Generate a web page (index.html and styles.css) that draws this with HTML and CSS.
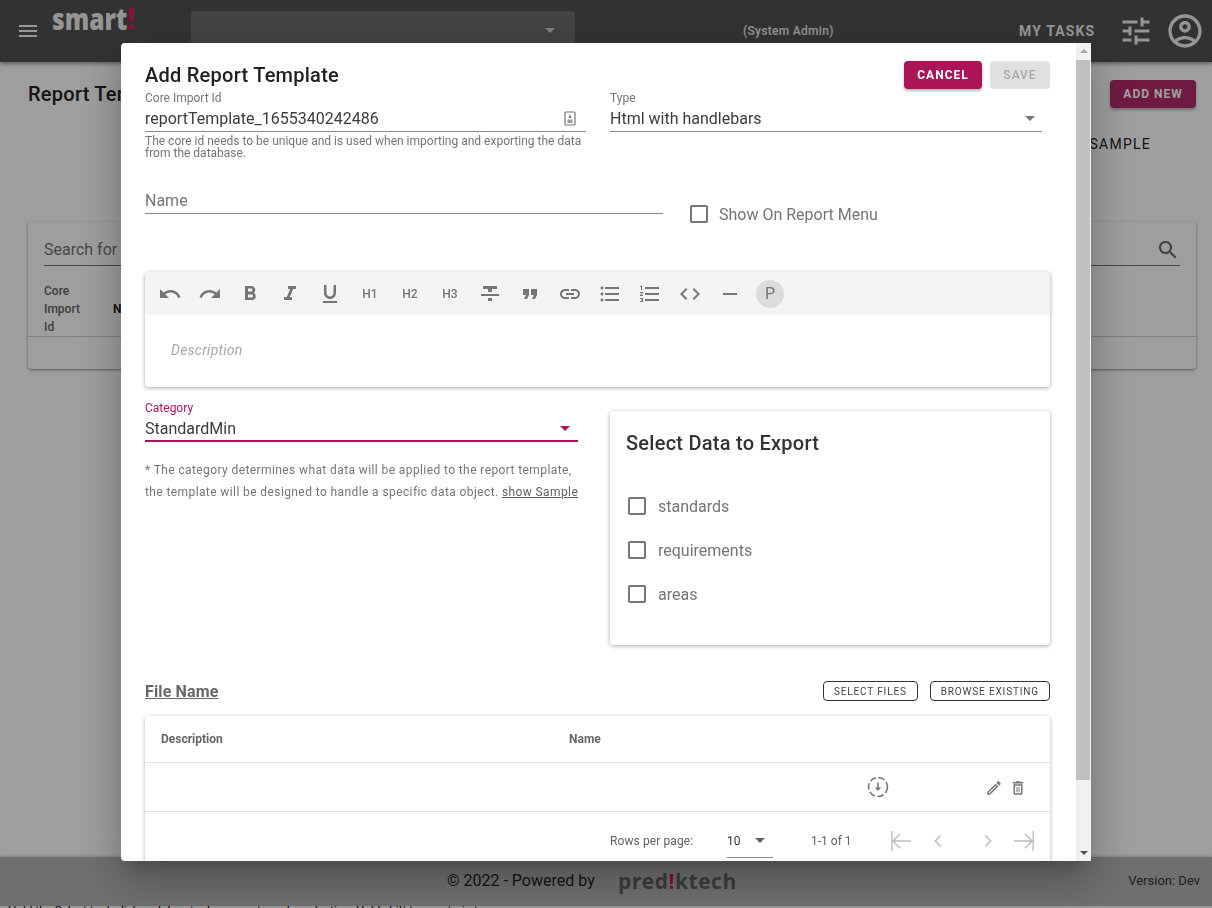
FILE: index.html
```html
<!DOCTYPE html>
<html lang="en">
<head>
<meta charset="UTF-8">
<meta name="viewport" content="width=device-width, initial-scale=1.0">
<title>Report Templates</title>
<link rel="stylesheet" href="styles.css">
</head>
<body>

<div class="page">
    <header class="topbar">
        <svg class="menu-icon" viewBox="0 0 24 24"><path d="M3 18h18v-2H3v2zm0-5h18v-2H3v2zm0-7v2h18V6H3z"/></svg>
        <div class="logo"><span class="logo-text">smart<span class="logo-mark">!</span></span></div>
        <div class="org-select"><span class="caret"></span></div>
        <div class="user-role">(System Admin)</div>
        <div class="my-tasks">MY TASKS</div>
        <svg class="tune-icon" viewBox="0 0 24 24"><path d="M3 17v2h6v-2H3zM3 5v2h10V5H3zm10 16v-2h8v-2h-8v-2h-2v6h2zM7 9v2H3v2h4v2h2V9H7zm14 4v-2H11v2h10zm-6-4h2V7h4V5h-4V3h-2v6z"/></svg>
        <svg class="user-icon" viewBox="0 0 24 24"><path d="M12 2C6.48 2 2 6.48 2 12s4.48 10 10 10 10-4.48 10-10S17.52 2 12 2zM7.35 18.5C8.66 17.56 10.26 17 12 17s3.34.56 4.65 1.5C15.34 19.44 13.74 20 12 20s-3.34-.56-4.65-1.5zm10.79-1.38C16.45 15.8 14.32 15 12 15s-4.45.8-6.14 2.12C4.7 15.73 4 13.95 4 12c0-4.42 3.58-8 8-8s8 3.58 8 8c0 1.95-.7 3.73-1.86 5.12z"/><path d="M12 6c-1.93 0-3.5 1.57-3.5 3.5S10.07 13 12 13s3.5-1.57 3.5-3.5S13.93 6 12 6zm0 5c-.83 0-1.5-.67-1.5-1.5S11.17 8 12 8s1.5.67 1.5 1.5S12.83 11 12 11z"/></svg>
    </header>

    <main class="content">
        <div class="content-head">
            <h1 class="page-title">Report Templates</h1>
            <button class="add-new">ADD NEW</button>
        </div>
        <div class="sample-link">SAMPLE</div>
        <section class="list-card">
            <div class="search-row">
                <span>Search for</span>
                <svg class="search-icon" viewBox="0 0 24 24"><path d="M15.5 14h-.79l-.28-.27C15.41 12.59 16 11.11 16 9.5 16 5.91 13.09 3 9.5 3S3 5.91 3 9.5 5.91 16 9.5 16c1.61 0 3.09-.59 4.23-1.57l.27.28v.79l5 4.99L20.49 19l-4.99-5zm-6 0C7.01 14 5 11.99 5 9.5S7.01 5 9.5 5 14 7.01 14 9.5 11.99 14 9.5 14z"/></svg>
            </div>
            <div class="list-head">
                <div class="list-col-core">Core Import Id</div>
                <div class="list-col-name">Name</div>
            </div>
        </section>
    </main>

    <footer class="footer">
        <span class="powered">© 2022 - Powered by</span>
        <span class="brand">pred<span class="logo-mark">!</span>ktech</span>
        <span class="version">Version: Dev</span>
    </footer>
    <div class="bottom-strip">Hold the Select tool, click and drag to draw a rectangular selection. Hold shift to constrain to a square.</div>
</div>

<div class="backdrop"></div>

<div class="modal">
    <div class="modal-body">
        <div class="modal-head">
            <h2 class="modal-title">Add Report Template</h2>
            <div class="modal-actions">
                <button class="btn-cancel">CANCEL</button>
                <button class="btn-save">SAVE</button>
            </div>
        </div>

        <div class="row-core">
            <div class="field field-core">
                <label class="field-label">Core Import Id</label>
                <div class="field-input">
                    <span>reportTemplate_1655340242486</span>
                    <svg class="id-icon" viewBox="0 0 12 15"><rect x="1" y="1" width="10" height="13" rx="1" fill="none" stroke="#757575" stroke-width="1.2"/><path d="M6 3.5l1.6 3.5H4.4z" fill="#757575"/><rect x="3.5" y="8.5" width="5" height="3.5" fill="#9a9a9a"/></svg>
                </div>
                <p class="field-help">The core id needs to be unique and is used when importing and exporting the data from the database.</p>
            </div>
            <div class="field field-type">
                <label class="field-label">Type</label>
                <div class="field-input">
                    <span>Html with handlebars</span>
                    <span class="caret caret-grey"></span>
                </div>
            </div>
        </div>

        <div class="row-name">
            <div class="field-input name-input"><span>Name</span></div>
            <label class="check-item menu-check"><span class="checkbox"></span>Show On Report Menu</label>
        </div>

        <div class="editor">
            <div class="editor-bar">
                <span class="tool"><svg viewBox="0 0 24 24"><path d="M12.5 8c-2.65 0-5.05.99-6.9 2.6L2 7v9h9l-3.62-3.62c1.39-1.16 3.16-1.88 5.12-1.88 3.54 0 6.55 2.31 7.6 5.5l2.37-.78C21.08 11.03 17.15 8 12.5 8z"/></svg></span>
                <span class="tool"><svg viewBox="0 0 24 24"><path d="M18.4 10.6C16.55 8.99 14.15 8 11.5 8c-4.65 0-8.58 3.03-9.96 7.22L3.9 16c1.05-3.19 4.05-5.5 7.6-5.5 1.95 0 3.73.72 5.12 1.88L13 16h9V7l-3.6 3.6z"/></svg></span>
                <span class="tool"><svg viewBox="0 0 24 24"><path d="M15.6 10.79c.97-.67 1.65-1.77 1.65-2.79 0-2.26-1.75-4-4-4H7v14h7.04c2.09 0 3.71-1.7 3.71-3.79 0-1.52-.86-2.82-2.15-3.42zM10 6.5h3c.83 0 1.5.67 1.5 1.5s-.67 1.5-1.5 1.5h-3v-3zm3.5 9H10v-3h3.5c.83 0 1.5.67 1.5 1.5s-.67 1.5-1.5 1.5z"/></svg></span>
                <span class="tool"><svg viewBox="0 0 24 24"><path d="M10 4v3h2.21l-3.42 8H6v3h8v-3h-2.21l3.42-8H18V4z"/></svg></span>
                <span class="tool"><svg viewBox="0 0 24 24"><path d="M12 17c3.31 0 6-2.69 6-6V3h-2.5v8c0 1.93-1.57 3.5-3.5 3.5S8.5 12.93 8.5 11V3H6v8c0 3.31 2.69 6 6 6zm-7 2v2h14v-2H5z"/></svg></span>
                <span class="tool tool-text">H1</span>
                <span class="tool tool-text">H2</span>
                <span class="tool tool-text">H3</span>
                <span class="tool"><svg viewBox="0 0 24 24"><path d="M10 19h4v-3h-4v3zM5 4v3h5v3h4V7h5V4H5zM3 14h18v-2H3v2z"/></svg></span>
                <span class="tool"><svg viewBox="0 0 24 24"><path d="M6 17h3l2-4V7H5v6h3zm8 0h3l2-4V7h-6v6h3z"/></svg></span>
                <span class="tool"><svg viewBox="0 0 24 24"><path d="M3.9 12c0-1.71 1.39-3.1 3.1-3.1h4V7H7c-2.76 0-5 2.24-5 5s2.24 5 5 5h4v-1.9H7c-1.71 0-3.1-1.39-3.1-3.1zM8 13h8v-2H8v2zm9-6h-4v1.9h4c1.71 0 3.1 1.39 3.1 3.1s-1.39 3.1-3.1 3.1h-4V17h4c2.76 0 5-2.24 5-5s-2.24-5-5-5z"/></svg></span>
                <span class="tool"><svg viewBox="0 0 24 24"><path d="M4 10.5c-.83 0-1.5.67-1.5 1.5s.67 1.5 1.5 1.5 1.5-.67 1.5-1.5-.67-1.5-1.5-1.5zm0-6c-.83 0-1.5.67-1.5 1.5S3.17 7.5 4 7.5 5.5 6.83 5.5 6 4.83 4.5 4 4.5zm0 12c-.83 0-1.5.68-1.5 1.5s.68 1.5 1.5 1.5 1.5-.68 1.5-1.5-.67-1.5-1.5-1.5zM7 19h14v-2H7v2zm0-6h14v-2H7v2zm0-8v2h14V5H7z"/></svg></span>
                <span class="tool"><svg viewBox="0 0 24 24"><path d="M2 17h2v.5H3v1h1v.5H2v1h3v-4H2v1zm1-9h1V4H2v1h1v3zm-1 3h1.8L2 13.1v.9h3v-1H3.2L5 10.9V10H2v1zm5-6v2h14V5H7zm0 14h14v-2H7v2zm0-6h14v-2H7v2z"/></svg></span>
                <span class="tool"><svg viewBox="0 0 24 24"><path d="M9.4 16.6L4.8 12l4.6-4.6L8 6l-6 6 6 6 1.4-1.4zm5.2 0l4.6-4.6-4.6-4.6L16 6l6 6-6 6-1.4-1.4z"/></svg></span>
                <span class="tool"><svg viewBox="0 0 24 24"><path d="M19 13H5v-2h14v2z"/></svg></span>
                <span class="tool tool-text tool-p">P</span>
            </div>
            <div class="editor-text">Description</div>
        </div>

        <div class="row-category">
            <div class="category-col">
                <label class="field-label label-active">Category</label>
                <div class="field-input input-active">
                    <span>StandardMin</span>
                    <span class="caret caret-active"></span>
                </div>
                <p class="category-note">* The category determines what data will be applied to the report template, the template will be designed to handle a specific data object. <a class="show-sample">show Sample</a></p>
            </div>
            <div class="export-card">
                <h3 class="export-title">Select Data to Export</h3>
                <label class="check-item"><span class="checkbox"></span>standards</label>
                <label class="check-item"><span class="checkbox"></span>requirements</label>
                <label class="check-item"><span class="checkbox"></span>areas</label>
            </div>
        </div>

        <div class="file-head">
            <span class="file-title">File Name</span>
            <div class="file-actions">
                <button class="btn-outline">SELECT FILES</button>
                <button class="btn-outline">BROWSE EXISTING</button>
            </div>
        </div>

        <div class="file-table">
            <div class="file-row file-row-head">
                <span class="col-desc">Description</span>
                <span class="col-name">Name</span>
            </div>
            <div class="file-row file-row-data">
                <svg class="download-icon" viewBox="0 0 24 24"><circle cx="12" cy="12" r="9.5" fill="none" stroke="#757575" stroke-width="1.6" stroke-dasharray="6.5 2.5"/><path d="M11.2 7.5h1.6v5h2.4L12 16l-3.2-3.5h2.4z" fill="#757575"/></svg>
                <svg class="row-icon edit-icon" viewBox="0 0 24 24"><path d="M14.06 9.02l.92.92L5.92 19H5v-.92l9.06-9.06M17.66 3c-.25 0-.51.1-.7.29l-1.83 1.83 3.75 3.75 1.83-1.83c.39-.39.39-1.02 0-1.41l-2.34-2.34c-.2-.2-.45-.29-.71-.29zm-3.6 3.19L3 17.25V21h3.75L17.81 9.94l-3.75-3.75z"/></svg>
                <svg class="row-icon" viewBox="0 0 24 24"><path d="M6 19c0 1.1.9 2 2 2h8c1.1 0 2-.9 2-2V7H6v12zM8 9h8v10H8V9zm7.5-5l-1-1h-5l-1 1H5v2h14V4z"/><path d="M10 10.5h1.3v7H10zM12.7 10.5H14v7h-1.3z"/></svg>
            </div>
            <div class="file-pager">
                <span class="pager-label">Rows per page:</span>
                <span class="pager-select">10<span class="caret caret-small"></span></span>
                <span class="pager-count">1-1 of 1</span>
                <svg class="pager-icon pager-first" viewBox="0 0 24 24"><path d="M2 1v22M23 12H3M11 4l-8 8 8 8" fill="none" stroke="#bdbdbd" stroke-width="1.5"/></svg>
                <svg class="pager-icon pager-prev" viewBox="0 0 24 24"><path d="M15 6l-6 6 6 6" fill="none" stroke="#bdbdbd" stroke-width="1.7"/></svg>
                <svg class="pager-icon pager-next" viewBox="0 0 24 24"><path d="M9 6l6 6-6 6" fill="none" stroke="#bdbdbd" stroke-width="1.7"/></svg>
                <svg class="pager-icon pager-last" viewBox="0 0 24 24"><path d="M22 1v22M1 12h20M13 4l8 8-8 8" fill="none" stroke="#bdbdbd" stroke-width="1.5"/></svg>
            </div>
        </div>
    </div>

    <div class="scrollbar">
        <span class="scroll-up"></span>
        <div class="scroll-track"><div class="scroll-thumb"></div></div>
        <span class="scroll-down"></span>
    </div>
</div>

</body>
</html>
```

FILE: styles.css
```css
* {
    box-sizing: border-box;
}

body {
    margin: 0;
    width: 1212px;
    height: 908px;
    overflow: hidden;
    background-color: #ffffff;
    font-family: Roboto, "Liberation Sans", sans-serif;
    color: #3c3c3c;
}

h1, h2, h3, p {
    margin: 0;
}

button {
    font-family: inherit;
    border: none;
    cursor: pointer;
}

.page {
    display: flex;
    flex-direction: column;
    height: 908px;
}

/* top bar */
.topbar {
    display: flex;
    align-items: center;
    height: 62px;
    flex-shrink: 0;
    padding-left: 16px;
    background-color: #525252;
    box-shadow: 0 2px 4px rgba(0, 0, 0, 0.4);
    position: relative;
}

.menu-icon {
    width: 24px;
    height: 24px;
    fill: #f5f5f5;
}

.logo {
    align-self: flex-start;
    margin: 0 0 0 12px;
    width: 139px;
    height: 36px;
    font-family: "Open Sans", sans-serif;
    font-weight: 800;
    font-size: 25px;
    line-height: 30px;
    color: #f0f0f0;
}

/* the mark is taller and narrower than any installed font */
.logo-text {
    display: inline-block;
    transform: scale(0.98, 1.2);
    transform-origin: left top;
}

.logo-mark {
    color: #d81b60;
}

.org-select {
    align-self: flex-end;
    display: flex;
    justify-content: flex-end;
    align-items: center;
    width: 384px;
    height: 51px;
    padding: 0 20px 13px 0;
    background-color: #6d6d6d;
    border-radius: 4px 4px 0 0;
}

.caret {
    width: 0;
    height: 0;
    border-left: 5px solid transparent;
    border-right: 5px solid transparent;
    border-top: 5px solid #d0d0d0;
}

.user-role {
    margin-left: 168px;
    width: 276px;
    font-size: 12px;
    font-weight: 500;
    letter-spacing: 0.3px;
    color: #f0f0f0;
}

.my-tasks {
    width: 99px;
    font-size: 14px;
    font-weight: 700;
    letter-spacing: 1.1px;
    color: #f0f0f0;
}

.tune-icon {
    width: 36px;
    height: 36px;
    fill: #f0f0f0;
}

.user-icon {
    width: 40px;
    height: 40px;
    margin-left: 11px;
    fill: #f0f0f0;
}

/* page behind the modal */
.content {
    flex: 1;
    padding: 18px 16px 0 28px;
    background-color: #ffffff;
}

.content-head {
    display: flex;
    justify-content: space-between;
    align-items: center;
    height: 28px;
}

.page-title {
    font-size: 20px;
    font-weight: 500;
    letter-spacing: 0.25px;
    color: #222222;
}

.add-new {
    width: 86px;
    height: 28px;
    border-radius: 4px;
    background-color: #b42a6c;
    color: #ffffff;
    font-size: 12px;
    font-weight: 700;
    letter-spacing: 1px;
    box-shadow: 0 2px 3px rgba(0, 0, 0, 0.3);
}

.sample-link {
    margin-top: 28px;
    text-align: right;
    padding-right: 45px;
    font-size: 14px;
    letter-spacing: 1.25px;
    color: #222222;
}

.list-card {
    height: 147px;
    margin-top: 70px;
    padding: 16px 16px 0;
    border-radius: 4px;
    box-shadow: 0 1px 3px rgba(0, 0, 0, 0.45);
}

.search-row {
    display: flex;
    justify-content: space-between;
    align-items: center;
    height: 28px;
    padding-bottom: 5px;
    border-bottom: 1px solid #777777;
    font-size: 16px;
    color: #757575;
}

.search-icon {
    width: 24px;
    height: 24px;
    margin-top: 2px;
    fill: #666666;
}

.list-head {
    display: flex;
    align-items: flex-end;
    height: 71px;
    margin: 0 -16px;
    padding: 0 16px;
    border-bottom: 1px solid #cccccc;
    font-size: 12px;
    font-weight: 500;
    line-height: 18px;
}

.list-col-core {
    width: 69px;
    padding-right: 30px;
    color: #666666;
}

.list-col-name {
    margin-bottom: 18px;
    font-weight: 700;
    color: #222222;
}

/* footer */
.footer {
    display: flex;
    align-items: center;
    height: 49px;
    flex-shrink: 0;
    padding: 0 12px 2px 447px;
    background-color: #b4b4b4;
    box-shadow: 0 -1px 3px rgba(0, 0, 0, 0.2);
    position: relative;
}

.powered {
    width: 171px;
    font-size: 16px;
    color: #222222;
}

.brand {
    font-family: "Open Sans", sans-serif;
    font-weight: 700;
    font-size: 21px;
    line-height: 24px;
    letter-spacing: 0.5px;
    color: #626262;
}

.version {
    margin-left: auto;
    font-size: 13px;
    color: #333333;
}

.bottom-strip {
    height: 2px;
    flex-shrink: 0;
    overflow: hidden;
    padding-left: 8px;
    font-size: 11.7px;
    line-height: 8px;
    white-space: nowrap;
    color: #000000;
}

.backdrop {
    position: fixed;
    top: 0;
    left: 0;
    width: 1212px;
    height: 908px;
    background-color: rgba(0, 0, 0, 0.38);
}

/* modal */
.modal {
    position: fixed;
    top: 43px;
    left: 121px;
    width: 970px;
    height: 818px;
    display: flex;
    overflow: hidden;
    background-color: #ffffff;
    border-radius: 4px 0 0 4px;
    box-shadow: 0 11px 15px -7px rgba(0, 0, 0, 0.2), 0 24px 38px 3px rgba(0, 0, 0, 0.14), 0 9px 46px 8px rgba(0, 0, 0, 0.12);
}

.modal-body {
    flex: 1;
    overflow: hidden;
    padding: 18px 26px 0 24px;
}

.modal-head {
    display: flex;
    justify-content: space-between;
    align-items: center;
    height: 28px;
}

.modal-title {
    font-size: 20px;
    font-weight: 500;
    letter-spacing: 0.25px;
    color: #212121;
}

.modal-actions {
    display: flex;
    gap: 8px;
}

.btn-cancel {
    width: 78px;
    height: 28px;
    border-radius: 4px;
    background-color: #ad1457;
    color: #ffffff;
    font-size: 12px;
    font-weight: 700;
    letter-spacing: 1px;
    box-shadow: 0 2px 3px rgba(0, 0, 0, 0.3);
}

.btn-save {
    width: 60px;
    height: 28px;
    border-radius: 4px;
    background-color: #e0e0e0;
    color: #a8a8a8;
    font-size: 12px;
    font-weight: 500;
    letter-spacing: 1px;
}

.row-core {
    display: flex;
    justify-content: space-between;
    padding-right: 8px;
}

.field-core {
    width: 441px;
}

.field-type {
    width: 432px;
}

.field-label {
    display: block;
    height: 18px;
    padding-top: 2px;
    font-size: 12px;
    line-height: 14px;
    color: #757575;
}

.label-active {
    padding-top: 3px;
    color: #ad1457;
}

.field-input {
    display: flex;
    justify-content: space-between;
    align-items: center;
    height: 25px;
    padding-bottom: 2px;
    border-bottom: 1px solid #8a8a8a;
    font-size: 16px;
}

.input-active {
    height: 26px;
    padding-bottom: 0;
    border-bottom: 2px solid #ad1457;
}

.id-icon {
    width: 12px;
    height: 15px;
    margin-right: 10px;
}

.field-help {
    margin-top: 3px;
    font-size: 12px;
    line-height: 12px;
    color: #757575;
}

.caret-grey {
    margin-right: 7px;
    border-top-color: #757575;
}

.caret-active {
    margin-right: 8px;
    border-top-color: #ad1457;
}

.row-name {
    display: flex;
    align-items: flex-end;
    height: 55px;
}

.name-input {
    width: 518px;
    color: #757575;
}

.check-item {
    display: flex;
    align-items: center;
    height: 44px;
    font-size: 16px;
    color: #757575;
}

.menu-check {
    height: 24px;
    margin: 0 0 -12px 27px;
}

.checkbox {
    width: 18px;
    height: 18px;
    margin-right: 11px;
    border: 2px solid #757575;
    border-radius: 2px;
}

.editor {
    margin-top: 58px;
    height: 115px;
    border-radius: 4px;
    box-shadow: 0 1px 4px rgba(0, 0, 0, 0.35);
}

.editor-bar {
    display: flex;
    align-items: center;
    height: 43px;
    padding-left: 5px;
    background-color: #f4f4f4;
    border-radius: 4px 4px 0 0;
}

.tool {
    display: flex;
    justify-content: center;
    align-items: center;
    width: 28px;
    height: 28px;
    margin: 0 6px;
    border-radius: 50%;
}

.tool svg {
    width: 24px;
    height: 24px;
    fill: #757575;
}

.tool-text {
    font-size: 12px;
    font-weight: 500;
    color: #757575;
}

.tool-p {
    font-size: 16px;
    font-weight: 400;
    background-color: #dcdcdc;
}

.editor-text {
    padding: 27px 26px 0;
    font-size: 14px;
    font-style: italic;
    letter-spacing: 0.25px;
    color: #a8a8a8;
}

.row-category {
    display: flex;
    justify-content: space-between;
    margin-top: 11px;
}

.category-col {
    width: 433px;
}

.category-note {
    margin: 17px -4px 0 0;
    font-size: 12px;
    line-height: 22px;
    letter-spacing: 0.4px;
    color: #757575;
}

.show-sample {
    text-decoration: underline;
    color: #616161;
}

.export-card {
    width: 440px;
    height: 234px;
    margin-top: 13px;
    padding: 20px 16px 0;
    border-radius: 4px;
    box-shadow: 0 1px 4px rgba(0, 0, 0, 0.35);
}

.export-title {
    height: 53px;
    font-size: 20px;
    font-weight: 500;
    letter-spacing: 0.25px;
    color: #333333;
}

.export-card .checkbox {
    margin-left: 2px;
    margin-right: 12px;
}

.file-head {
    display: flex;
    justify-content: space-between;
    align-items: center;
    height: 20px;
    margin-top: 36px;
}

.file-title {
    margin-top: 1px;
    font-size: 16px;
    font-weight: 700;
    letter-spacing: 0.15px;
    text-decoration: underline;
    color: #666666;
}

.file-actions {
    display: flex;
    gap: 12px;
}

.btn-outline {
    height: 20px;
    padding: 0 10px;
    background-color: #ffffff;
    border: 1px solid #333333;
    border-radius: 4px;
    font-size: 10px;
    font-weight: 400;
    letter-spacing: 0.85px;
    color: #444444;
}

.file-table {
    margin-top: 15px;
    border-radius: 4px;
    box-shadow: 0 1px 4px rgba(0, 0, 0, 0.3);
}

.file-row {
    display: flex;
    align-items: center;
    border-bottom: 1px solid #e0e0e0;
    padding-left: 16px;
}

.file-row-head {
    height: 47px;
    font-size: 12px;
    font-weight: 700;
    color: #666666;
}

.col-desc {
    width: 408px;
}

.file-row-data {
    height: 49px;
}

.download-icon {
    width: 24px;
    height: 24px;
    margin-left: 705px;
}

.row-icon {
    width: 18px;
    height: 18px;
    margin: 1px 0 0 6px;
    fill: #757575;
}

.edit-icon {
    margin-left: 95px;
}

.file-pager {
    display: flex;
    align-items: center;
    height: 58px;
    padding-left: 465px;
    font-size: 12px;
    color: #616161;
}

.pager-label {
    width: 117px;
    letter-spacing: 0.1px;
}

.pager-select {
    display: flex;
    justify-content: space-between;
    align-items: center;
    width: 46px;
    height: 32px;
    margin-top: 2px;
    padding-right: 8px;
    padding-bottom: 2px;
    border-bottom: 1px solid #8a8a8a;
    color: #333333;
}

.caret-small {
    border-top-color: #616161;
}

.pager-count {
    width: 79px;
    margin-left: 38px;
}

.pager-icon {
    width: 22px;
    height: 22px;
    flex-shrink: 0;
}

.pager-prev {
    margin-left: 15px;
}

.pager-next {
    margin-left: 28px;
}

.pager-last {
    margin-left: 14px;
}

/* scrollbar */
.scrollbar {
    display: flex;
    flex-direction: column;
    align-items: center;
    width: 15px;
    background-color: #f1f1f1;
}

.scroll-up,
.scroll-down {
    flex-shrink: 0;
    width: 0;
    height: 0;
    border-left: 4px solid transparent;
    border-right: 4px solid transparent;
}

.scroll-up {
    margin: 6px 0 5px;
    border-bottom: 4px solid #a3a3a3;
}

.scroll-down {
    margin: 5px 0 6px;
    border-top: 4px solid #505050;
}

.scroll-track {
    flex: 1;
    width: 100%;
    padding-right: 1px;
}

.scroll-thumb {
    height: 720px;
    margin-top: 2px;
    background-color: #c1c1c1;
}
```
